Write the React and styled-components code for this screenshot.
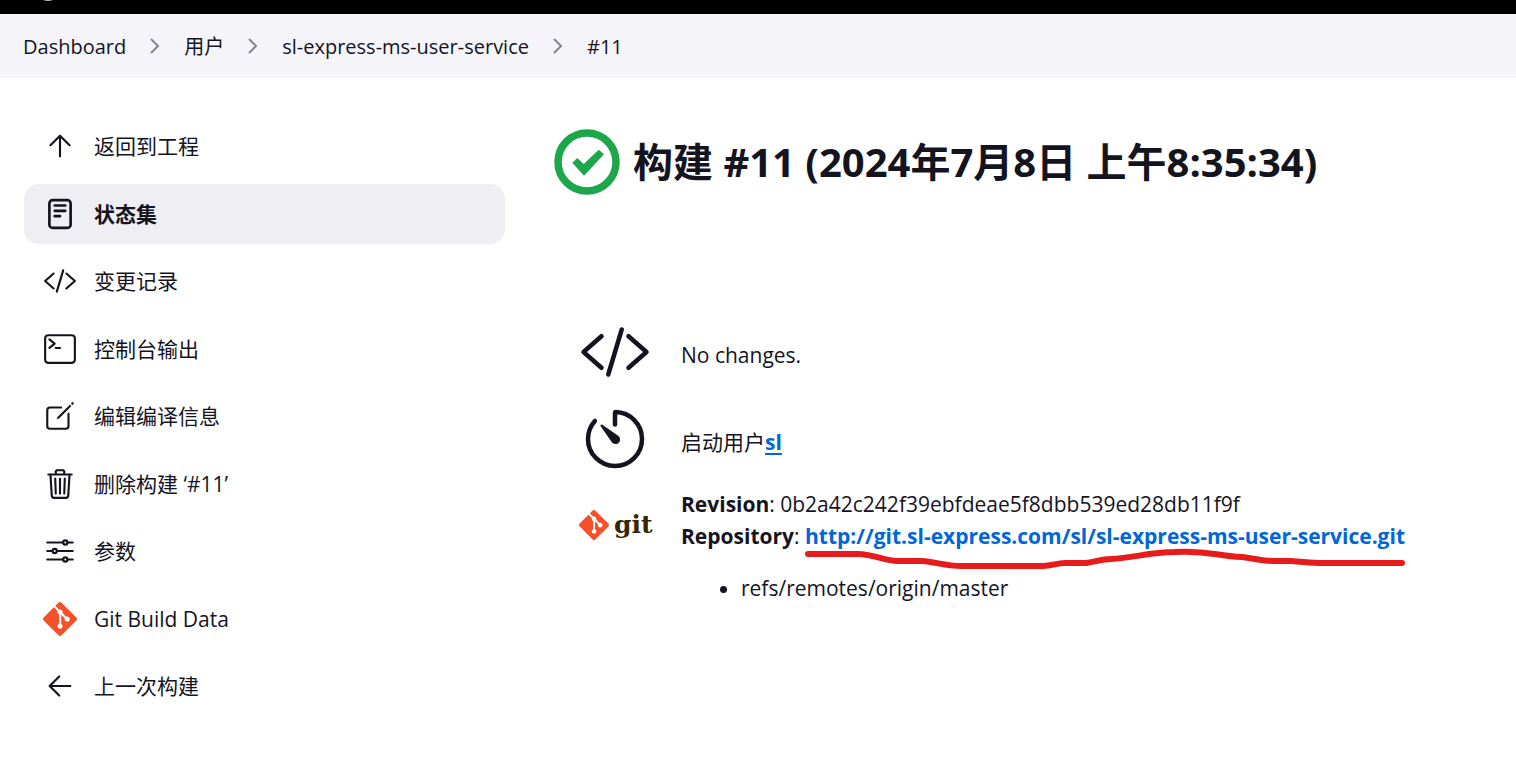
import React from "react";
import styled, { createGlobalStyle } from "styled-components";
import { SiGit } from "react-icons/si";

const GlobalStyle = createGlobalStyle`
  *, *::before, *::after { box-sizing: border-box; }
  body {
    margin: 0;
    background: #fff;
    color: #14141f;
    font-family: "Open Sans", "Noto Sans CJK SC", sans-serif;
    font-size: 21px;
    line-height: 32px;
  }
`;

const TopBar = styled.header`
  height: 14px;
  padding-left: 41px;
  background: #000;
  svg { display: block; }
`;

const Breadcrumbs = styled.nav`
  background: #f4f4f9;
  ol {
    display: flex;
    align-items: center;
    min-height: 64px;
    margin: 0;
    padding: 0 23px;
    list-style: none;
    font-size: 20px;
  }
  li { display: flex; align-items: center; }
  a { padding-top: 2px; color: inherit; text-decoration: none; }
`;

const Chevron = styled.svg`
  width: 10px;
  height: 16px;
  margin: 0 24px;
  fill: none;
  stroke: #85858f;
  stroke-width: 2;
`;

const Page = styled.div`
  display: grid;
  grid-template-columns: 481px minmax(0, 1fr);
  column-gap: 49px;
  padding: 38px 24px;
`;

const TaskList = styled.ul`
  display: flex;
  flex-direction: column;
  justify-content: space-between;
  min-height: 600px;
  margin: 0;
  padding: 0;
  list-style: none;
`;

const Icon = styled.svg`
  flex: none;
  display: block;
  width: ${(p) => p.$size}px;
  height: ${(p) => p.$size}px;
  fill: none;
  stroke: currentColor;
  stroke-width: 32;
  stroke-linecap: round;
  stroke-linejoin: round;
`;

const TaskLink = styled.a`
  display: flex;
  align-items: center;
  gap: 17px;
  height: 60px;
  padding: 0 19px;
  border-radius: 15px;
  color: inherit;
  text-decoration: none;
  font-weight: ${(p) => (p.$active ? 700 : 400)};
  background: ${(p) => (p.$active ? "#eeeef3" : "transparent")};
  ${Icon} { stroke-width: ${(p) => (p.$active ? 40 : 32)}; }
`;

const GitMark = styled(SiGit)`
  flex: none;
  display: block;
  width: ${(p) => p.size}px;
  height: ${(p) => p.size}px;
  color: #f4502a;
`;

const Title = styled.h1`
  display: flex;
  align-items: center;
  gap: 13px;
  min-height: 66px;
  margin: 13px 0 113px;
  font-size: 40px;
  line-height: 52px;
  font-weight: 700;
  svg { flex: none; }
`;

const Summary = styled.div`
  display: flex;
  flex-direction: column;
  padding-left: 25px;
`;

const Row = styled.section`
  display: grid;
  grid-template-columns: 72px minmax(0, 1fr);
  column-gap: 30px;
  align-items: ${(p) => (p.$top ? "start" : "center")};
  min-height: 87px;
`;

const Detail = styled.div`
  padding-top: 6px;
  p { margin: 0; }
  ul { margin: 20px 0; padding-left: 60px; }
`;

const StrongLink = styled.a`
  color: #0066d9;
  font-weight: 700;
  text-decoration: ${(p) => (p.$underlined ? "underline" : "none")};
  text-decoration-thickness: 2px;
  text-underline-offset: 3px;
`;

const Marked = styled.span`
  position: relative;
  display: inline-block;
  svg {
    position: absolute;
    left: 0;
    top: 28px;
    width: 100%;
    height: 22px;
    overflow: visible;
    pointer-events: none;
  }
`;

const GitLogo = styled.div`
  display: flex;
  align-items: center;
  gap: 5px;
  margin-top: 28px;
  color: #362701;
  font-family: "DejaVu Serif", serif;
  font-size: 25px;
  line-height: 30px;
  font-weight: 700;
`;

const shapes = {
  up: <path d="M112 244l144-144 144 144M256 120v292" />,
  left: <path d="M244 400L100 256l144-144M120 256h292" />,
  status: (
    <>
      <rect x="96" y="48" width="320" height="416" rx="48" />
      <path d="M176 128h160M176 208h160M176 288h80" />
    </>
  ),
  code: <path d="M160 368L32 256l128-112M352 368l128-112-128-112M304 96l-96 320" />,
  terminal: (
    <>
      <rect x="32" y="48" width="448" height="416" rx="48" />
      <path d="M96 112l80 64-80 64M192 240h64" />
    </>
  ),
  edit: (
    <>
      <path d="M384 224v184a40 40 0 01-40 40H104a40 40 0 01-40-40V168a40 40 0 0140-40h167.48" />
      <path
        fill="currentColor"
        stroke="none"
        d="M459.94 53.25a16.06 16.06 0 00-23.22-.56L424.35 65a8 8 0 000 11.31l11.34 11.32a8 8 0 0011.34 0l12.06-12c6.1-6.09 6.67-16.01.85-22.38zM399.34 90L218.82 270.2a9 9 0 00-2.31 3.93L208.16 299a3.91 3.91 0 004.86 4.86l24.85-8.35a9 9 0 003.93-2.31L422 112.66a9 9 0 000-12.66l-9.95-10a9 9 0 00-12.71 0z"
      />
    </>
  ),
  trash: (
    <path d="M112 112l20 320c.95 18.49 14.4 32 32 32h184c17.67 0 30.87-13.51 32-32l20-320M80 112h352M192 112V72a23.93 23.93 0 0124-24h80a23.93 23.93 0 0124 24v40M256 176v224M184 176l8 224M328 176l-8 224" />
  ),
  options: (
    <>
      <path d="M368 128h80M64 128h240M368 384h80M64 384h240M208 256h240M64 256h80" />
      <circle cx="336" cy="128" r="32" />
      <circle cx="176" cy="256" r="32" />
      <circle cx="336" cy="384" r="32" />
    </>
  ),
  timer: (
    <>
      <path d="M112.91 128A191.85 191.85 0 0064 254c-1.18 106.35 85.65 193.8 192 194 106.2.2 192-85.83 192-192 0-104.54-83.55-189.61-187.5-192a4.36 4.36 0 00-4.5 4.37V152" />
      <path
        fill="currentColor"
        stroke="none"
        d="M233.38 278.63l-79-113a8.13 8.13 0 0111.32-11.32l113 79a32.5 32.5 0 01-37.25 53.26 33.21 33.21 0 01-8.07-7.94z"
      />
    </>
  ),
};

const LineIcon = ({ name, size = 34 }) => (
  <Icon viewBox="0 0 512 512" $size={size} aria-hidden="true">
    {shapes[name]}
  </Icon>
);

const crumbs = ["Dashboard", "用户", "sl-express-ms-user-service", "#11"];

const tasks = [
  { icon: "up", label: "返回到工程" },
  { icon: "status", label: "状态集", active: true },
  { icon: "code", label: "变更记录" },
  { icon: "terminal", label: "控制台输出" },
  { icon: "edit", label: "编辑编译信息" },
  { icon: "trash", label: "删除构建 ‘#11’" },
  { icon: "options", label: "参数" },
  { icon: "git", label: "Git Build Data" },
  { icon: "left", label: "上一次构建" },
];

export default function App() {
  return (
    <>
      <GlobalStyle />
      <TopBar>
        <svg width="14" height="4" viewBox="0 0 14 4" aria-hidden="true">
          <ellipse cx="7" cy="-2" rx="7" ry="3" fill="#b8b8b8" />
        </svg>
      </TopBar>
      <Breadcrumbs aria-label="Breadcrumb">
        <ol>
          {crumbs.map((crumb, i) => (
            <li key={crumb}>
              {i > 0 && (
                <Chevron viewBox="0 0 10 16" aria-hidden="true">
                  <path d="M1 1l7 7-7 7" />
                </Chevron>
              )}
              <a href="#crumb">{crumb}</a>
            </li>
          ))}
        </ol>
      </Breadcrumbs>
      <Page>
        <nav aria-label="Tasks">
          <TaskList>
            {tasks.map((task) => (
              <li key={task.label}>
                <TaskLink href="#task" $active={task.active}>
                  {task.icon === "git" ? <GitMark size={34} /> : <LineIcon name={task.icon} />}
                  {task.label}
                </TaskLink>
              </li>
            ))}
          </TaskList>
        </nav>
        <main>
          <Title>
            <svg width="66" height="66" viewBox="0 0 66 66" aria-hidden="true">
              <circle cx="33" cy="33" r="29" fill="none" stroke="#1ea64b" strokeWidth="7.5" />
              <path d="M18.3 33.7l5-4.7 6.4 6 15-14.3 5.3 4.6-20 21.4z" fill="#1ea64b" />
            </svg>
            构建 #11 (2024年7月8日 上午8:35:34)
          </Title>
          <Summary>
            <Row>
              <LineIcon name="code" size={72} />
              <Detail>No changes.</Detail>
            </Row>
            <Row>
              <LineIcon name="timer" size={72} />
              <Detail>
                启动用户
                <StrongLink href="#user" $underlined>sl</StrongLink>
              </Detail>
            </Row>
            <Row $top>
              <GitLogo>
                <GitMark size={30} />
                git
              </GitLogo>
              <Detail>
                <p>
                  <b>Revision</b>: 0b2a42c242f39ebfdeae5f8dbb539ed28db11f9f
                </p>
                <p>
                  <b>Repository</b>:{" "}
                  <Marked>
                    <StrongLink href="#repository">
                      http://git.sl-express.com/sl/sl-express-ms-user-service.git
                    </StrongLink>
                    <svg viewBox="0 0 593 22" preserveAspectRatio="none" aria-hidden="true">
                      <path
                        d="M3 6H52C68 6 78 13 92 13H115C130 14 138 18 155 18H235C245 18 248 15 257 15H278C288 14 292 11 302 11C325 10 340 4 365 4C400 2 405 8 432 9C448 11 452 13 464 13H480C495 14 500 15 512 15H590"
                        fill="none"
                        stroke="#e71b1b"
                        strokeWidth="6"
                        strokeLinecap="round"
                        strokeLinejoin="round"
                      />
                    </svg>
                  </Marked>
                </p>
                <ul>
                  <li>refs/remotes/origin/master</li>
                </ul>
              </Detail>
            </Row>
          </Summary>
        </main>
      </Page>
    </>
  );
}
